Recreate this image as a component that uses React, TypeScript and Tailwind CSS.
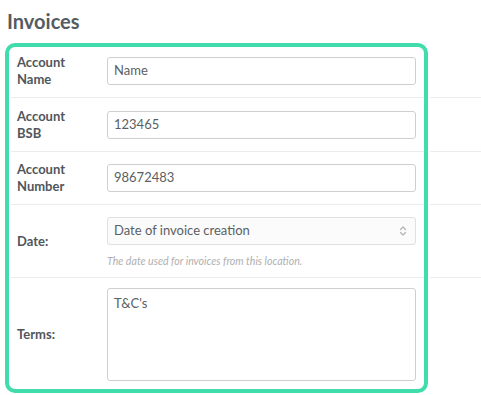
import React from 'react';

const font = { fontFamily: 'Lato, "Open Sans", sans-serif' };

const Row: React.FC<{ label: React.ReactNode; children: React.ReactNode; className?: string }> = ({ label, children, className }) => (
  <div className={`flex items-center border-b border-[#ececec] pl-[6px] ${className ?? ''}`}>
    <div className="w-[90px] shrink-0 text-[13px] font-bold leading-[17px] text-[#50565c]">{label}</div>
    <div className="shrink-0">{children}</div>
  </div>
);

const TextInput: React.FC<{ value: string }> = ({ value }) => (
  <div className="flex h-[28px] w-[309px] items-center rounded-[3px] border border-[#cfcfcf] bg-white px-[6px] text-[13px] text-[#5a5f64]">
    {value}
  </div>
);

export default function App() {
  return (
    <div className="relative h-[395px] w-[481px] overflow-hidden bg-white" style={font}>
      <h1 className="pl-[7px] pt-[8px] text-[20px] font-bold leading-[26px] text-[#555b61]">Invoices</h1>

      <div className="mt-[10px] pl-[11px]">
        <Row label={<>Account<br />Name</>} className="h-[54px]">
          <TextInput value="Name" />
        </Row>
        <Row label={<>Account<br />BSB</>} className="h-[54px]">
          <TextInput value="123465" />
        </Row>
        <Row label={<>Account<br />Number</>} className="h-[53px]">
          <TextInput value="98672483" />
        </Row>
        <Row label="Date:" className="h-[73px]">
          <div className="pt-[2px]">
            <div className="flex h-[28px] w-[309px] items-center justify-between rounded-[3px] border border-[#e0e0e0] bg-[#fbfbfb] pl-[6px] pr-[8px] text-[13px] text-[#5a5f64]">
              <span>Date of invoice creation</span>
              <svg width="8" height="12" viewBox="0 0 8 12" fill="none" stroke="#b5b5b5" strokeWidth="1.3" strokeLinecap="round" strokeLinejoin="round">
                <path d="M1.5 4.5 L4 2 L6.5 4.5" />
                <path d="M1.5 7.5 L4 10 L6.5 7.5" />
              </svg>
            </div>
            <div className="mt-[10px] text-[10.6px] italic leading-[13px] text-[#b0b0b0]">
              The date used for invoices from this location.
            </div>
          </div>
        </Row>
        <Row label="Terms:" className="border-b-0 pb-[12px] pt-[10px]">
          <div className="h-[93px] w-[309px] rounded-[3px] border border-[#cfcfcf] bg-white px-[6px] pt-[5px] text-[13px] text-[#5a5f64]">
            T&amp;C's
          </div>
        </Row>
      </div>

      {/* highlight overlay */}
      <div className="pointer-events-none absolute left-[5px] top-[43px] h-[350px] w-[423px] rounded-[10px] border-[4px] border-[#41dcab] shadow-[0_0_0_2px_#ffffff]" />
    </div>
  );
}
